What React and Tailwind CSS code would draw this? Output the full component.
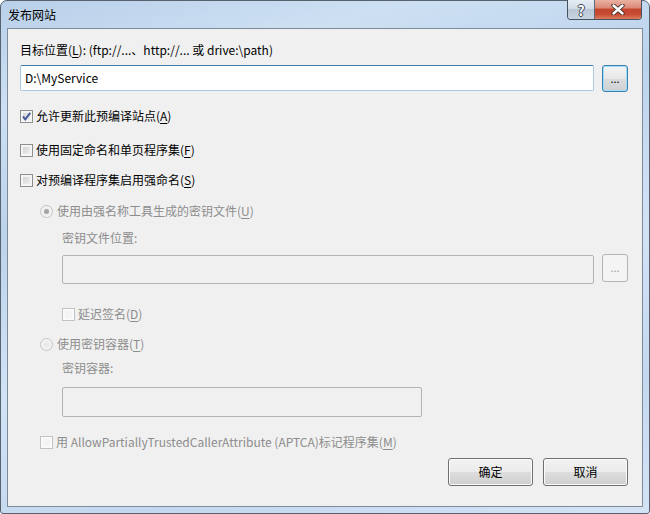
import React from "react";

const FONT = "font-['Noto_Sans_CJK_SC',sans-serif]";

function Box({ checked = false, disabled = false }) {
  return (
    <span
      className={
        disabled
          ? "flex h-[13px] w-[13px] shrink-0 items-center justify-center border border-[#c3c3c3] bg-[#f4f4f4] shadow-[inset_0_0_0_2px_#fafafa]"
          : "flex h-[13px] w-[13px] shrink-0 items-center justify-center border border-[#8e8f8f] bg-[linear-gradient(135deg,#cdcdcd,#f7f7f7)] shadow-[inset_0_0_0_2px_#f5f5f5]"
      }
    >
      {checked && (
        <svg width="11" height="11" viewBox="0 0 11 11">
          <path d="M2 5.5 L4.3 8.3 L9.3 1.8" fill="none" stroke="#4a5c9c" strokeWidth="2" />
        </svg>
      )}
    </span>
  );
}

function Radio({ checked = false }) {
  return (
    <span className="flex h-[13px] w-[13px] shrink-0 items-center justify-center rounded-full border border-[#c3c3c3] bg-[radial-gradient(circle,#e6e6e6,#fafafa)]">
      {checked && <span className="h-[5px] w-[5px] rounded-full bg-[#a4a4a4]" />}
    </span>
  );
}

function U({ children }) {
  return <span className="underline underline-offset-[2px]">{children}</span>;
}

export default function App() {
  return (
    <div
      className={`${FONT} flex h-[514px] w-[650px] flex-col rounded-t-[7px] rounded-b-[3px] border border-[#56636f] bg-[linear-gradient(165deg,#b9d0ea_0%,#cde0f3_16%,#bcd3ec_34%,#d2e3f5_58%,#c3d8ef_80%,#d4e4f5_100%)] text-[12px] leading-4 text-black`}
    >
      {/* title bar */}
      <div className="flex h-[27px] shrink-0 items-start justify-between pl-[7px] pr-[7px]">
        <span className="mt-[6px] leading-4">发布网站</span>
        <div className="-mt-px flex h-[20px] overflow-hidden rounded-b-[4px] border border-t-0 border-[#46525f]">
          <div className="flex w-[27px] items-center justify-center border-r border-[#5d6a78] bg-[linear-gradient(#e5ecf4_0%,#d3dde8_45%,#b9c7d5_50%,#c7d3df_100%)]">
            <span className="text-[14px] font-bold leading-4 text-white [text-shadow:1px_0_#3a4654,-1px_0_#3a4654,0_1px_#3a4654,0_-1px_#3a4654]">
              ?
            </span>
          </div>
          <div className="flex w-[46px] items-center justify-center bg-[linear-gradient(#eab0a2_0%,#dc8a78_40%,#c5452f_50%,#c84b33_75%,#de7d5b_100%)]">
            <svg width="14" height="11" viewBox="0 0 14 11">
              <path d="M2.5 1.5 L11.5 9.5 M11.5 1.5 L2.5 9.5" stroke="#3b2a26" strokeWidth="4.2" strokeLinecap="round" />
              <path d="M2.5 1.5 L11.5 9.5 M11.5 1.5 L2.5 9.5" stroke="#ffffff" strokeWidth="2.4" strokeLinecap="round" />
            </svg>
          </div>
        </div>
      </div>

      {/* client area */}
      <div className="mx-[6px] mb-[6px] flex flex-1 flex-col border border-[#7d8b9b] bg-[#f0f0f0] pl-[12px] pr-[14px] pt-[13px]">
        <div className="h-4">
          目标位置(<U>L</U>): (ftp://...、http://... 或 drive:\path)
        </div>

        <div className="mt-[7px] flex items-start gap-[8px]">
          <div className="flex h-[26px] flex-1 items-center rounded-[2px] border border-[#a9c9e6] border-t-[#3d7bad] bg-white pl-[4px]">
            {"D:\\MyService"}
          </div>
          <button className="flex h-[27px] w-[26px] items-center justify-center rounded-[3px] border border-[#3c7fb1] bg-[linear-gradient(#f4f4f4_0%,#e7e7e7_50%,#d9dbdd_51%,#cfd2d5_100%)] pb-[2px] shadow-[inset_0_0_0_1px_#9fdcf8] text-[11px] leading-3">
            ...
          </button>
        </div>

        <div className="mt-[16px] flex h-4 items-center gap-[3px]">
          <Box checked />
          <span>
            允许更新此预编译站点(<U>A</U>)
          </span>
        </div>

        <div className="mt-[18px] flex h-4 items-center gap-[3px]">
          <Box />
          <span>
            使用固定命名和单页程序集(<U>F</U>)
          </span>
        </div>

        <div className="mt-[14px] flex h-4 items-center gap-[3px]">
          <Box />
          <span>
            对预编译程序集启用强命名(<U>S</U>)
          </span>
        </div>

        <div className="ml-[20px] mt-[15px] flex h-4 items-center gap-[4px] text-[#8d8d8d]">
          <Radio checked />
          <span>
            使用由强名称工具生成的密钥文件(<U>U</U>)
          </span>
        </div>

        <div className="ml-[42px] mt-[11px] h-4 text-[#8d8d8d]">密钥文件位置:</div>

        <div className="ml-[42px] mt-[8px] flex items-start gap-[8px]">
          <div className="mt-px h-[29px] flex-1 rounded-[2px] border border-[#b3b3b3] bg-[#f0f0f0]" />
          <button className="flex h-[28px] w-[26px] items-center justify-center rounded-[3px] border border-[#b0b4b8] bg-[#f4f4f4] pb-[2px] text-[11px] leading-3 text-[#a0a0a0]">
            ...
          </button>
        </div>

        <div className="ml-[42px] mt-[22px] flex h-4 items-center gap-[3px] text-[#8d8d8d]">
          <Box disabled />
          <span>
            延迟签名(<U>D</U>)
          </span>
        </div>

        <div className="ml-[20px] mt-[14px] flex h-4 items-center gap-[4px] text-[#8d8d8d]">
          <Radio />
          <span>
            使用密钥容器(<U>T</U>)
          </span>
        </div>

        <div className="ml-[42px] mt-[8px] h-4 text-[#8d8d8d]">密钥容器:</div>

        <div className="ml-[42px] mt-[11px] h-[30px] w-[360px] rounded-[2px] border border-[#b3b3b3] bg-[#f0f0f0]" />

        <div className="ml-[20px] mt-[17px] flex h-4 items-center gap-[3px] text-[#8d8d8d]">
          <Box disabled />
          <span>
            用 AllowPartiallyTrustedCallerAttribute (APTCA)标记程序集(<U>M</U>)
          </span>
        </div>

        <div className="mt-[8px] flex justify-end gap-[10px]">
          <button className="h-[28px] w-[85px] rounded-[3px] border border-[#707070] bg-[linear-gradient(#f2f2f2_0%,#ebebeb_50%,#dddddd_51%,#cfcfcf_100%)] text-[12px] leading-4 text-black shadow-[inset_0_0_0_1px_#fbfbfb]">
            确定
          </button>
          <button className="h-[28px] w-[85px] rounded-[3px] border border-[#707070] bg-[linear-gradient(#f2f2f2_0%,#ebebeb_50%,#dddddd_51%,#cfcfcf_100%)] text-[12px] leading-4 text-black shadow-[inset_0_0_0_1px_#fbfbfb]">
            取消
          </button>
        </div>
      </div>
    </div>
  );
}
